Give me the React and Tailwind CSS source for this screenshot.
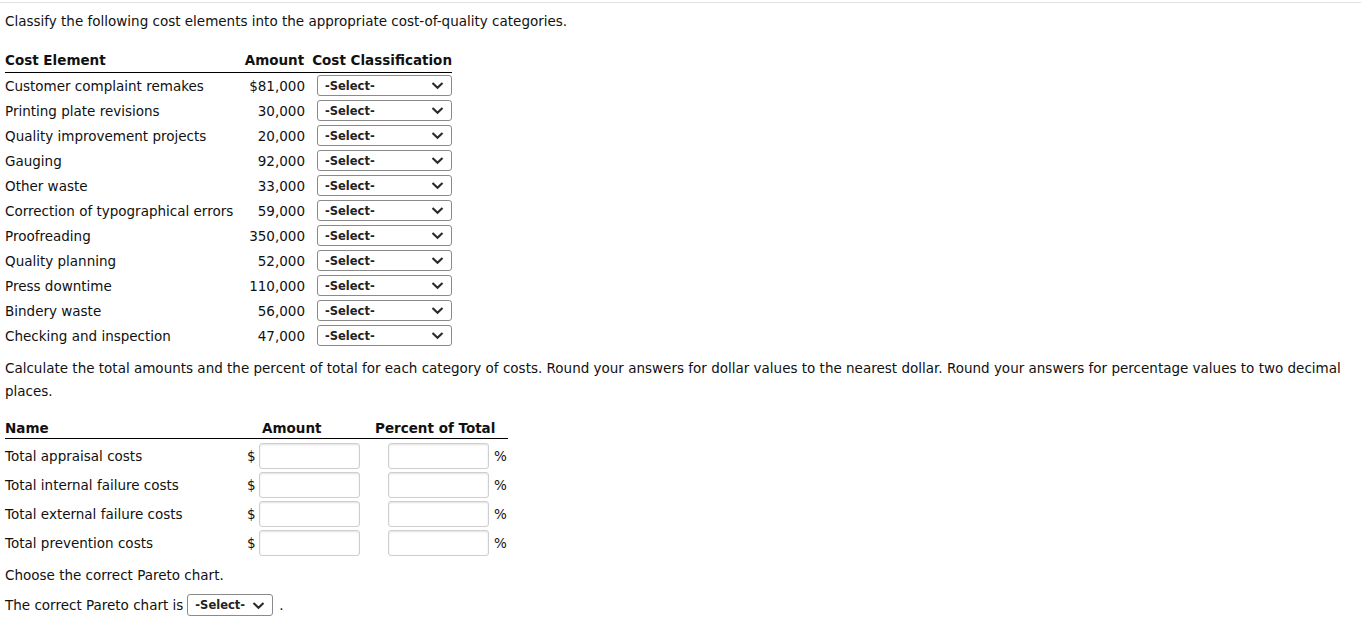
import React from "react";

const rows = [
  ["Customer complaint remakes", "$81,000"],
  ["Printing plate revisions", "30,000"],
  ["Quality improvement projects", "20,000"],
  ["Gauging", "92,000"],
  ["Other waste", "33,000"],
  ["Correction of typographical errors", "59,000"],
  ["Proofreading", "350,000"],
  ["Quality planning", "52,000"],
  ["Press downtime", "110,000"],
  ["Bindery waste", "56,000"],
  ["Checking and inspection", "47,000"],
];

const totals = [
  "Total appraisal costs",
  "Total internal failure costs",
  "Total external failure costs",
  "Total prevention costs",
];

function Chevron() {
  return (
    <svg width="13" height="9" viewBox="0 0 13 9" className="shrink-0">
      <path d="M1.5 2 L6.5 6.8 L11.5 2" fill="none" stroke="#2a2a2a" strokeWidth="2.1" />
    </svg>
  );
}

function SelectBox({ className }) {
  return (
    <div
      className={
        "flex items-center justify-between border border-[#8a8a8a] rounded-[3px] bg-white pl-[7px] pr-[7px] " +
        className
      }
    >
      <span className="text-[11.5px] font-bold text-[#222] leading-[14px]">-Select-</span>
      <Chevron />
    </div>
  );
}

function Input() {
  return (
    <div className="w-[101px] h-[26px] border border-[#cfcfcf] rounded-[3px] bg-white shadow-[inset_0_1px_2px_rgba(0,0,0,0.12)]" />
  );
}

export default function App() {
  return (
    <div className="min-h-[642px] bg-white text-[#111] text-[13.5px] font-['DejaVu_Sans',Verdana,sans-serif]">
      <div className="h-[3px] border-b border-[#e2e2e2]" />
      <div className="px-[5px]">
        <p className="mt-[10px] leading-[16px] whitespace-nowrap">
          Classify the following cost elements into the appropriate cost-of-quality categories.
        </p>

        <div className="mt-[23px] w-[447px]">
          <div className="flex items-end border-b-[1.5px] border-black pb-[4px] font-bold leading-[16px]">
            <div className="w-[240px]">Cost Element</div>
            <div className="w-[60px] text-right whitespace-nowrap">Amount</div>
            <div className="ml-[8px] whitespace-nowrap">Cost Classification</div>
          </div>
          {rows.map(([name, amt]) => (
            <div key={name} className="flex items-center h-[25px] leading-[16px]">
              <div className="w-[240px] whitespace-nowrap">{name}</div>
              <div className="w-[60px] text-right">{amt}</div>
              <SelectBox className="ml-[12px] w-[135px] h-[21px]" />
            </div>
          ))}
        </div>

        <p className="mt-[9px] leading-[23px] max-w-[1345px]">
          Calculate the total amounts and the percent of total for each category of costs. Round your answers for dollar
          values to the nearest dollar. Round your answers for percentage values to two decimal places.
        </p>

        <div className="mt-[17px] w-[503px]">
          <div className="flex items-end border-b-[1.5px] border-black pb-[2px] font-bold leading-[16px]">
            <div className="w-[257px]">Name</div>
            <div className="w-[113px] whitespace-nowrap">Amount</div>
            <div className="whitespace-nowrap">Percent of Total</div>
          </div>
          <div className="mt-[2px]">
            {totals.map((t) => (
              <div key={t} className="flex items-center h-[29px] leading-[16px]">
                <div className="w-[242px] whitespace-nowrap">{t}</div>
                <div className="w-[12px]">$</div>
                <Input />
                <div className="w-[28px]" />
                <Input />
                <div className="ml-[5px]">%</div>
              </div>
            ))}
          </div>
        </div>

        <p className="mt-[10px] leading-[16px]">Choose the correct Pareto chart.</p>
        <div className="mt-[11px] flex items-center leading-[16px]">
          <span className="whitespace-nowrap">The correct Pareto chart is</span>
          <SelectBox className="ml-[4px] w-[86px] h-[22px] gap-[4px]" />
          <span className="ml-[6px]">.</span>
        </div>
      </div>
    </div>
  );
}
